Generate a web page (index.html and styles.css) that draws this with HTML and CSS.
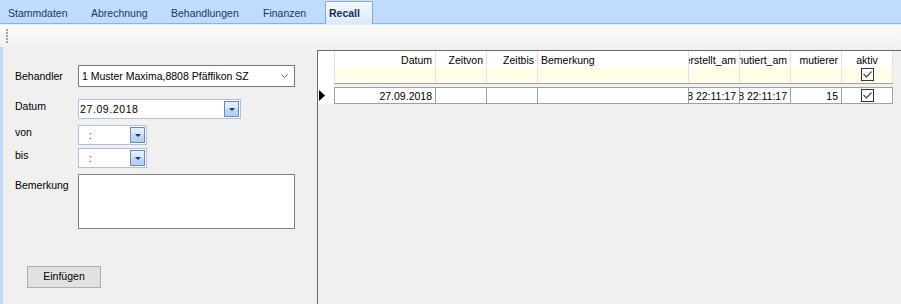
FILE: index.html
```html
<!DOCTYPE html>
<html lang="de">
<head>
    <meta charset="UTF-8">
    <title>Recall</title>
    <link rel="stylesheet" href="styles.css">
</head>
<body>
    <div class="tabs">
        <div class="tab tab-stamm">Stammdaten</div>
        <div class="tab tab-abr">Abrechnung</div>
        <div class="tab tab-beh">Behandlungen</div>
        <div class="tab tab-fin">Finanzen</div>
        <div class="tab active">Recall</div>
    </div>
    <div class="toolbar"><span class="grip"></span></div>

    <div class="main">
        <div class="form">
            <div class="row row-behandler">
                <label>Behandler</label>
                <div class="combo">
                    <span>1 Muster Maxima,8808 Pfäffikon SZ</span>
                    <svg class="chevron" width="7" height="4" viewBox="0 0 7 4"><path d="M0.5 0.5 L3.5 3.5 L6.5 0.5" fill="none" stroke="#666" stroke-width="1"/></svg>
                </div>
            </div>
            <div class="row row-datum">
                <label>Datum</label>
                <div class="picker picker-date">
                    <span class="date">27.09.2018</span>
                    <span class="drop"><svg width="6" height="3" viewBox="0 0 6 3"><polygon points="0,0 6,0 3,3" fill="#18377a"/></svg></span>
                </div>
            </div>
            <div class="row row-von">
                <label>von</label>
                <div class="picker picker-time">
                    <span class="colon">:</span>
                    <span class="drop"><svg width="6" height="3" viewBox="0 0 6 3"><polygon points="0,0 6,0 3,3" fill="#18377a"/></svg></span>
                </div>
            </div>
            <div class="row row-bis">
                <label>bis</label>
                <div class="picker picker-time">
                    <span class="colon">:</span>
                    <span class="drop"><svg width="6" height="3" viewBox="0 0 6 3"><polygon points="0,0 6,0 3,3" fill="#18377a"/></svg></span>
                </div>
            </div>
            <div class="row row-bem">
                <label>Bemerkung</label>
                <div class="memo"></div>
            </div>
            <button class="btn">Einfügen</button>
        </div>

        <div class="grid">
            <div class="rowheads">
                <svg class="current" width="6" height="11" viewBox="0 0 6 11"><polygon points="0,0 6,5.5 0,11" fill="#000"/></svg>
            </div>
            <div class="cols">
                <div class="hrow">
                    <div class="c w-datum right">Datum</div>
                    <div class="c right">Zeitvon</div>
                    <div class="c right">Zeitbis</div>
                    <div class="c w-bem">Bemerkung</div>
                    <div class="c right">erstellt_am</div>
                    <div class="c right">mutiert_am</div>
                    <div class="c right">mutierer</div>
                    <div class="c center">aktiv</div>
                </div>
                <div class="frow">
                    <div class="c w-datum"></div>
                    <div class="c"></div>
                    <div class="c"></div>
                    <div class="c w-bem"></div>
                    <div class="c"></div>
                    <div class="c"></div>
                    <div class="c"></div>
                    <div class="c center"><span class="check"><svg width="11" height="11" viewBox="0 0 11 11"><path d="M1.5 5 L4.5 8 L9.5 2.5" fill="none" stroke="#444" stroke-width="1.2"/></svg></span></div>
                </div>
                <div class="drow">
                    <div class="c w-datum right focus">27.09.2018</div>
                    <div class="c"></div>
                    <div class="c"></div>
                    <div class="c w-bem"></div>
                    <div class="c right">27.09.2018 22:11:17</div>
                    <div class="c right">27.09.2018 22:11:17</div>
                    <div class="c right">15</div>
                    <div class="c center"><span class="check"><svg width="11" height="11" viewBox="0 0 11 11"><path d="M1.5 5 L4.5 8 L9.5 2.5" fill="none" stroke="#444" stroke-width="1.2"/></svg></span></div>
                </div>
            </div>
        </div>
    </div>
</body>
</html>
```

FILE: styles.css
```css
* {
    box-sizing: border-box;
}

body {
    margin: 0;
    width: 901px;
    height: 304px;
    overflow: hidden;
    background: #f0f0f0;
    font-family: 'Liberation Sans', Arial, sans-serif;
    font-size: 10.5px;
    color: #000;
}

/* tab strip */
.tabs {
    display: flex;
    height: 24px;
    background: #bfdbff;
    border-top: 1px solid #c9dcf4;
    border-bottom: 1px solid #8dafdf;
}

.tab {
    height: 22px;
    padding: 2px 0 0 8px;
    line-height: 20px;
    color: #1e395b;
    white-space: nowrap;
}

.tab-stamm { width: 83px; }
.tab-abr { width: 80px; }
.tab-beh { width: 92px; }
.tab-fin { width: 70px; }

.tab.active {
    width: 48px;
    height: 23px;
    padding: 1px 0 0 3px;
    border: 1px solid #86a9d9;
    border-bottom: none;
    border-radius: 2px 2px 0 0;
    background: linear-gradient(#f4f8fd, #dde8f6);
    font-weight: bold;
    color: #15315c;
}

.toolbar {
    height: 23px;
    border-top: 1px solid #dcf3ff;
    background: linear-gradient(#fbfbfb, #f0f0f0);
    padding: 4px 0 0 6px;
}

.grip {
    display: block;
    width: 2px;
    height: 15px;
    background: repeating-linear-gradient(to bottom, #a3a3a3 0 2px, transparent 2px 3px);
}

.main {
    display: flex;
    height: 257px;
}

/* left form */
.form {
    width: 317px;
    flex-shrink: 0;
    border-left: 3px solid #c0d9f5;
    padding: 18px 0 0 12px;
}

.row {
    display: flex;
}

.row label {
    width: 63px;
    line-height: 13px;
    flex-shrink: 0;
}

.row-behandler { align-items: center; }
.row-datum { margin-top: 12px; }
.row-von { margin-top: 6px; }
.row-bis { margin-top: 3px; }
.row-bem { margin-top: 6px; }

.row-datum label,
.row-von label,
.row-bis label {
    padding-top: 1px;
}

.row-bem label {
    padding-top: 5px;
}

.combo {
    display: flex;
    align-items: center;
    width: 217px;
    height: 22px;
    border: 1px solid #7a7a7a;
    background: #fff;
    padding-left: 3px;
    line-height: 20px;
    white-space: nowrap;
}

.chevron {
    margin-left: auto;
    margin-right: 6px;
}

.picker {
    display: flex;
    height: 20px;
    border: 1px solid #aec2de;
    background: #fff;
    line-height: 18px;
    padding: 1px;
}

.picker-date { width: 163px; }
.picker-time { width: 69px; }

.date {
    line-height: 16px;
    letter-spacing: 0.6px;
}

.colon {
    line-height: 16px;
    padding-left: 9px;
    color: #7d1658;
}

.drop {
    display: flex;
    align-items: center;
    justify-content: center;
    width: 15px;
    height: 16px;
    margin-left: auto;
    border: 1px solid #6f88b3;
    background: linear-gradient(#e6f0fc 0%, #d6e6fb 45%, #bfd8f8 50%, #b3cff6 100%);
}

.memo {
    width: 217px;
    height: 55px;
    border: 1px solid #7f7f7f;
    background: #fff;
}

.btn {
    display: block;
    margin: 37px 0 0 12px;
    width: 74px;
    height: 22px;
    padding: 0 0 2px;
    border: 1px solid #adadad;
    background: #e1e1e1;
    font-family: inherit;
    font-size: 10.5px;
    line-height: 18px;
    color: #000;
}

/* data grid */
.grid {
    flex: 1;
    display: flex;
    align-items: flex-start;
    margin-top: 3px;
    border-top: 1px solid #6a6a6a;
    border-left: 1px solid #6a6a6a;
}

.rowheads {
    width: 16px;
    height: 53px;
    background: #fff;
    padding: 39px 0 0 1px;
}

.current {
    display: block;
}

.cols {
    width: 559px;
}

.hrow,
.frow,
.drow {
    display: flex;
    border-left: 1px solid #e2e2e2;
}

.hrow {
    height: 17px;
    background: #fff;
}

.frow {
    height: 16px;
    background: #fffde5;
    border-bottom: 1px solid #a0a0a0;
}

.drow {
    height: 17px;
    margin-top: 3px;
    background: #fff;
    border: 1px solid #a0a0a0;
    border-right: none;
}

.c {
    display: flex;
    width: 51px;
    flex-shrink: 0;
    padding: 0 3px;
    overflow: hidden;
    white-space: nowrap;
    border-right: 1px solid #e2e2e2;
}

.drow .c {
    border-right-color: #a0a0a0;
    padding-top: 1px;
    line-height: 14px;
}

.hrow .c {
    padding-top: 1px;
    line-height: 16px;
}

.w-datum { width: 101px; }
.w-bem { width: 151px; }

.right { justify-content: flex-end; }
.center { justify-content: center; }

.focus {
    position: relative;
}

.focus::after {
    content: "";
    position: absolute;
    top: -1px;
    bottom: -1px;
    left: -1px;
    right: -1px;
    border: 1px dotted #000;
}

.check {
    display: block;
    width: 13px;
    height: 13px;
    border: 1px solid #333;
    background: #fff;
}

.check svg {
    display: block;
}
```
